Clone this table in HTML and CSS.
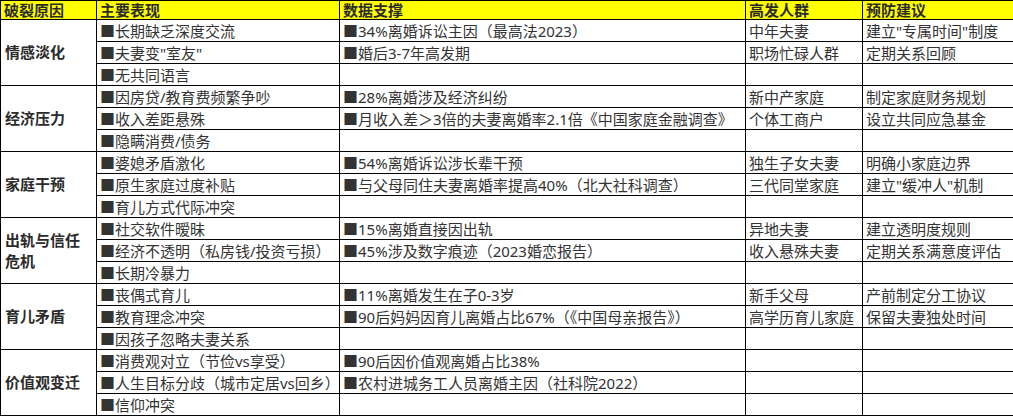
FILE: index.html
```html
<!DOCTYPE html>
<html lang="zh-CN">
<head>
<meta charset="utf-8">
<link rel="stylesheet" href="styles.css">
</head>
<body>
<table class="grid">
  <colgroup>
    <col class="c1"><col class="c2"><col class="c3"><col class="c4"><col class="c5">
  </colgroup>
  <thead>
    <tr class="head">
      <th>破裂原因</th><th>主要表现</th><th>数据支撑</th><th>高发人群</th><th>预防建议</th>
    </tr>
  </thead>
  <tbody>
    <tr><td class="cause" rowspan="3">情感淡化</td><td>■长期缺乏深度交流</td><td>■34%离婚诉讼主因（最高法2023）</td><td>中年夫妻</td><td>建立"专属时间"制度</td></tr>
    <tr><td>■夫妻变"室友"</td><td>■婚后3-7年高发期</td><td>职场忙碌人群</td><td>定期关系回顾</td></tr>
    <tr><td>■无共同语言</td><td></td><td></td><td></td></tr>

    <tr><td class="cause" rowspan="3">经济压力</td><td>■因房贷/教育费频繁争吵</td><td>■28%离婚涉及经济纠纷</td><td>新中产家庭</td><td>制定家庭财务规划</td></tr>
    <tr><td>■收入差距悬殊</td><td>■月收入差＞3倍的夫妻离婚率2.1倍《中国家庭金融调查》</td><td>个体工商户</td><td>设立共同应急基金</td></tr>
    <tr><td>■隐瞒消费/债务</td><td></td><td></td><td></td></tr>

    <tr><td class="cause" rowspan="3">家庭干预</td><td>■婆媳矛盾激化</td><td>■54%离婚诉讼涉长辈干预</td><td>独生子女夫妻</td><td>明确小家庭边界</td></tr>
    <tr><td>■原生家庭过度补贴</td><td>■与父母同住夫妻离婚率提高40%（北大社科调查）</td><td>三代同堂家庭</td><td>建立"缓冲人"机制</td></tr>
    <tr><td>■育儿方式代际冲突</td><td></td><td></td><td></td></tr>

    <tr><td class="cause" rowspan="3">出轨与信任危机</td><td>■社交软件暧昧</td><td>■15%离婚直接因出轨</td><td>异地夫妻</td><td>建立透明度规则</td></tr>
    <tr><td>■经济不透明（私房钱/投资亏损）</td><td>■45%涉及数字痕迹（2023婚恋报告）</td><td>收入悬殊夫妻</td><td>定期关系满意度评估</td></tr>
    <tr><td>■长期冷暴力</td><td></td><td></td><td></td></tr>

    <tr><td class="cause" rowspan="3">育儿矛盾</td><td>■丧偶式育儿</td><td>■11%离婚发生在子0-3岁</td><td>新手父母</td><td>产前制定分工协议</td></tr>
    <tr><td>■教育理念冲突</td><td>■90后妈妈因育儿离婚占比67%（《中国母亲报告》）</td><td>高学历育儿家庭</td><td>保留夫妻独处时间</td></tr>
    <tr><td>■因孩子忽略夫妻关系</td><td></td><td></td><td></td></tr>

    <tr><td class="cause" rowspan="3">价值观变迁</td><td>■消费观对立（节俭vs享受）</td><td>■90后因价值观离婚占比38%</td><td></td><td></td></tr>
    <tr><td>■人生目标分歧（城市定居vs回乡）</td><td>■农村进城务工人员离婚主因（社科院2022）</td><td></td><td></td></tr>
    <tr><td>■信仰冲突</td><td></td><td></td><td></td></tr>
  </tbody>
</table>
</body>
</html>
```

FILE: styles.css
```css
html, body {
  margin: 0;
  padding: 0;
  background: #ffffff;
}

.grid {
  border-collapse: collapse;
  table-layout: fixed;
  width: 1013px;
  font-family: "Noto Sans", "Noto Sans CJK SC", sans-serif;
  font-size: 15px;
  color: #333333;
}

.c1 { width: 96px; }
.c2 { width: 243px; }
.c3 { width: 406px; }
.c4 { width: 117px; }
.c5 { width: 151px; }

.grid th,
.grid td {
  border: 1px solid #000000;
  padding: 0 2px 0 3px;
  white-space: nowrap;
  overflow: hidden;
  text-align: left;
  vertical-align: middle;
  line-height: 20px;
}

.head th {
  background: #ffff00;
  font-weight: 700;
  height: 18px;
  line-height: 18px;
  color: #2b2b2b;
}

.grid tbody td {
  height: 21px;
}

.grid td.cause {
  font-weight: 700;
  white-space: normal;
  line-height: 21px;
  padding: 0 10px 0 4px;
  color: #2b2b2b;
}
```
